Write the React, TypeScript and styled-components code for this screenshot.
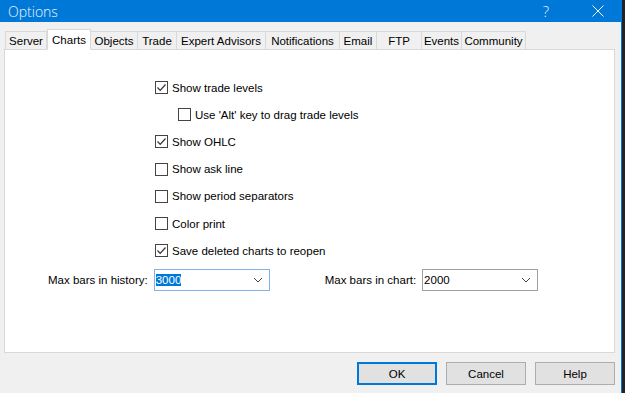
import React from 'react';
import styled, { createGlobalStyle } from 'styled-components';

const GlobalStyle = createGlobalStyle`
  html, body {
    margin: 0;
    padding: 0;
    background: #1f232a;
    font-family: 'Liberation Sans', Arial, sans-serif;
    font-size: 11.5px;
    color: #000;
  }
`;

const tabs = [
  { name: 'Server', width: 42 },
  { name: 'Charts', width: 44 },
  { name: 'Objects', width: 47 },
  { name: 'Trade', width: 39 },
  { name: 'Expert Advisors', width: 89 },
  { name: 'Notifications', width: 74 },
  { name: 'Email', width: 37 },
  { name: 'FTP', width: 45 },
  { name: 'Events', width: 40 },
  { name: 'Community', width: 64 },
];

const options = [
  { label: 'Show trade levels', checked: true, indent: false },
  { label: "Use 'Alt' key to drag trade levels", checked: false, indent: true },
  { label: 'Show OHLC', checked: true, indent: false },
  { label: 'Show ask line', checked: false, indent: false },
  { label: 'Show period separators', checked: false, indent: false },
  { label: 'Color print', checked: false, indent: false },
  { label: 'Save deleted charts to reopen', checked: true, indent: false },
];

function Chevron() {
  return (
    <svg width="10" height="6" viewBox="0 0 10 6">
      <path d="M1 1 L5 5 L9 1" fill="none" stroke="#444" strokeWidth="1" />
    </svg>
  );
}

function Options() {
  return (
    <Window>
      <GlobalStyle />
      <TitleBar>
        <Title>Options</Title>
        <TitleButtons>
          <HelpGlyph>?</HelpGlyph>
          <svg width="12" height="12" viewBox="0 0 12 12">
            <path d="M0.5 0.5 L11.5 11.5 M11.5 0.5 L0.5 11.5" stroke="#fff" strokeWidth="1" />
          </svg>
        </TitleButtons>
      </TitleBar>

      <Body>
        <TabStrip>
          {tabs.map((t) => (
            <Tab key={t.name} active={t.name === 'Charts'} style={{ width: t.width }}>
              {t.name}
            </Tab>
          ))}
        </TabStrip>

        <Panel>
          <CheckList>
            {options.map((o) => (
              <CheckRow key={o.label} indent={o.indent}>
                <Box>
                  {o.checked && (
                    <svg width="11" height="11" viewBox="0 0 11 11">
                      <path d="M1.5 5.5 L4.2 8.3 L9.5 2.5" fill="none" stroke="#333" strokeWidth="1.2" />
                    </svg>
                  )}
                </Box>
                <span>{o.label}</span>
              </CheckRow>
            ))}
          </CheckList>

          <LimitsRow>
            <Field>
              <FieldLabel>Max bars in history:</FieldLabel>
              <Combo focused>
                <Selected>3000</Selected>
                <Chevron />
              </Combo>
            </Field>
            <Field>
              <FieldLabel>Max bars in chart:</FieldLabel>
              <Combo>
                <span>2000</span>
                <Chevron />
              </Combo>
            </Field>
          </LimitsRow>
        </Panel>

        <ButtonRow>
          <Button primary>OK</Button>
          <Button>Cancel</Button>
          <Button>Help</Button>
        </ButtonRow>
      </Body>
    </Window>
  );
}

const Window = styled.div`
  width: 621px;
  height: 393px;
  background: #f0f0f0;
  border-right: 1px solid #0078d7;
  display: flex;
  flex-direction: column;
`;

const TitleBar = styled.div`
  height: 22px;
  background: #0078d7;
  display: flex;
  align-items: center;
  justify-content: space-between;
  color: #eef4fb;
  padding: 0 17px 0 8px;
`;

const Title = styled.span`
  font-family: 'Open Sans', 'Liberation Sans', sans-serif;
  font-weight: 300;
  font-size: 14px;
`;

const TitleButtons = styled.div`
  display: flex;
  align-items: center;
  gap: 43px;
`;

const HelpGlyph = styled.span`
  font-family: 'Open Sans', 'Liberation Sans', sans-serif;
  font-size: 15px;
  font-weight: 300;
`;

const Body = styled.div`
  display: flex;
  flex-direction: column;
  padding: 7px 6px 0 4px;
`;

const TabStrip = styled.div`
  display: flex;
  align-items: flex-end;
  height: 21px;
  padding-left: 1px;
  margin-bottom: -1px;
  position: relative;
  z-index: 1;
`;

const Tab = styled.div<{ active?: boolean }>`
  height: ${(p) => (p.active ? 21 : 19)}px;
  box-sizing: border-box;
  padding: ${(p) => (p.active ? '2px 0 0' : '1px 0 0')};
  background: ${(p) => (p.active ? '#fff' : '#f0f0f0')};
  border: 1px solid #d9d9d9;
  border-bottom: ${(p) => (p.active ? '1px solid #fff' : '1px solid #d9d9d9')};
  border-left: ${(p) => (p.active ? '1px solid #d9d9d9' : 'none')};
  white-space: nowrap;
  text-align: center;
  line-height: 16px;
  font-size: 11.5px;
  &:first-child {
    border-left: 1px solid #d9d9d9;
  }
`;

const Panel = styled.div`
  width: 611px;
  height: 304px;
  box-sizing: border-box;
  background: #fff;
  border: 1px solid #d9d9d9;
  padding: 24px 0 0 0;
  display: flex;
  flex-direction: column;
`;

const CheckList = styled.div`
  display: flex;
  flex-direction: column;
  padding-left: 150px;
`;

const CheckRow = styled.label<{ indent?: boolean }>`
  display: flex;
  align-items: center;
  gap: 4px;
  height: 27.2px;
  padding-left: ${(p) => (p.indent ? 23 : 0)}px;
`;

const Box = styled.span`
  width: 13px;
  height: 13px;
  box-sizing: border-box;
  border: 1px solid #444;
  background: #fff;
  display: flex;
  align-items: center;
  justify-content: center;
`;

const LimitsRow = styled.div`
  display: flex;
  align-items: center;
  margin-top: 5px;
  padding-left: 43px;
  gap: 55px;
`;

const Field = styled.div`
  display: flex;
  align-items: center;
  gap: 6px;
`;

const FieldLabel = styled.span`
  font-size: 11.5px;
`;

const Combo = styled.div<{ focused?: boolean }>`
  width: 116px;
  height: 22px;
  box-sizing: border-box;
  border: 1px solid ${(p) => (p.focused ? '#7eb4ea' : '#a0a0a0')};
  background: #fff;
  display: flex;
  align-items: center;
  justify-content: space-between;
  padding: 0 6px 0 1px;
`;

const Selected = styled.span`
  background: #0078d7;
  color: #fff;
`;

const ButtonRow = styled.div`
  display: flex;
  justify-content: flex-end;
  gap: 9px;
  margin-top: 9px;
`;

const Button = styled.div<{ primary?: boolean }>`
  width: 80px;
  height: 23px;
  box-sizing: border-box;
  background: #e1e1e1;
  border: ${(p) => (p.primary ? '2px solid #0078d7' : '1px solid #adadad')};
  display: flex;
  align-items: center;
  justify-content: center;
  font-size: 11.5px;
`;

export default Options;
